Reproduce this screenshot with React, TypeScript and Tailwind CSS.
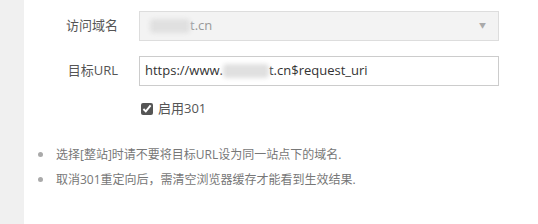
import React from "react";

const font = { fontFamily: '"Microsoft YaHei", "Open Sans", "Noto Sans CJK SC", sans-serif' };

function Blur({ w }: { w: number }) {
    return (
        <span
            className="inline-block h-[14px] align-middle bg-[#e0e0e0] blur-[2px] rounded-sm"
            style={{ width: w }}
        />
    );
}

export default function App() {
    return (
        <div className="flex w-[538px] h-[224px] bg-white text-[13px]" style={font}>
            <div className="w-[24px] shrink-0 bg-[#f0f0f0]" />
            <div className="flex-1 pt-[11px]">
                {/* Domain */}
                <div className="flex items-center h-[30px]">
                    <label className="w-[94px] text-right text-[#555]">访问域名</label>
                    <div className="ml-[21px] w-[360px] h-[30px] border border-[#dddddd] bg-[#f3f3f3] flex items-center pl-[10px] pr-[12px] text-[#999]">
                        <Blur w={40} />
                        <span>t.cn</span>
                        <span className="ml-auto text-[7px] text-[#aaa]">▼</span>
                    </div>
                </div>

                {/* Target URL */}
                <div className="flex items-center h-[30px] mt-[15px]">
                    <label className="w-[94px] text-right text-[#555]">目标URL</label>
                    <div className="ml-[21px] w-[360px] h-[30px] border border-[#cccccc] bg-white flex items-center pl-[5px] text-[#333]">
                        <span>https://www.</span>
                        <Blur w={46} />
                        <span>t.cn$request_uri</span>
                    </div>
                </div>

                {/* 301 checkbox */}
                <div className="flex items-center mt-[14px] ml-[117px] h-[18px] text-[#555]">
                    <input type="checkbox" defaultChecked className="w-[12px] h-[12px] m-0 accent-[#555]" />
                    <span className="ml-[5px]">启用301</span>
                </div>

                {/* Tips */}
                <ul className="mt-[24px] ml-[14px] text-[12px] text-[#777] leading-[25px]">
                    <li className="flex items-center">
                        <span className="w-[5px] h-[5px] rounded-full bg-[#aaa] mr-[13px]" />
                        选择[整站]时请不要将目标URL设为同一站点下的域名.
                    </li>
                    <li className="flex items-center">
                        <span className="w-[5px] h-[5px] rounded-full bg-[#aaa] mr-[13px]" />
                        取消301重定向后，需清空浏览器缓存才能看到生效结果.
                    </li>
                </ul>
            </div>
        </div>
    );
}
